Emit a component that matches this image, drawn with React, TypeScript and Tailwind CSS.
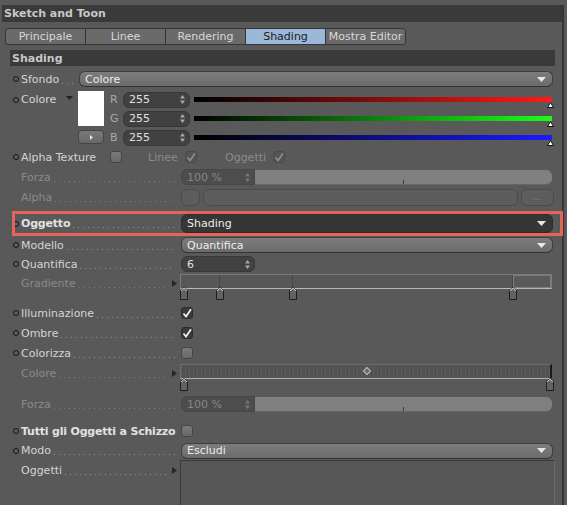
import React from 'react';

const tabs = ['Principale', 'Linee', 'Rendering', 'Shading', 'Mostra Editor'];

function Bullet() {
  return <span className="ml-[2px] w-[6px] h-[6px] rounded-full border border-[#141414] bg-[#5e5e5e]" />;
}

function Tri() {
  return (
    <svg width="5" height="7" viewBox="0 0 5 7" className="shrink-0 mr-[4px]">
      <path d="M0 0L5 3.5L0 7Z" fill="#262626" />
    </svg>
  );
}

function Label({
  text,
  bullet = false,
  dim = false,
  bold = false,
  arrow = false,
  dots = true,
  w = 'w-[170px]',
  h = 'h-full',
}: {
  text: string;
  bullet?: boolean;
  dim?: boolean;
  bold?: boolean;
  arrow?: boolean;
  dots?: boolean;
  w?: string;
  h?: string;
}) {
  const color = dim ? 'text-[#8a8a8a]' : bold ? 'text-[#e2e2e2]' : 'text-[#d4d4d4]';
  return (
    <div className={`flex items-center shrink-0 ${w} ${h}`}>
      <span className="w-[10px] shrink-0 flex items-center">{bullet && <Bullet />}</span>
      <span className={`whitespace-nowrap ${bold ? 'font-bold tracking-[-0.2px]' : ''} ${color}`}>{text}</span>
      {dots && (
        <span className={`flex-1 self-stretch flex items-center ml-[3px] ${arrow ? 'mr-[4px]' : 'mr-[6px]'}`}>
          <span
            className={`w-full h-[1px] mt-[8px] bg-repeat-x bg-[length:5px_1px] ${
              dim
                ? 'bg-[linear-gradient(90deg,#7b7b7b_1px,transparent_1px)]'
                : 'bg-[linear-gradient(90deg,#939393_1px,transparent_1px)]'
            }`}
          />
        </span>
      )}
      {arrow && <Tri />}
    </div>
  );
}

function Row({ h = 'h-[20px]', className = '', children }: { h?: string; className?: string; children: React.ReactNode }) {
  return <div className={`flex items-center pl-[11px] pr-[9px] shrink-0 ${h} ${className}`}>{children}</div>;
}

function DropArrow() {
  return (
    <svg width="9" height="5" viewBox="0 0 9 5">
      <path d="M0 0H9L4.5 5Z" fill="#e8e8e8" />
    </svg>
  );
}

function Spinner({ dim = false }: { dim?: boolean }) {
  return (
    <svg width="5" height="9" viewBox="0 0 5 9">
      <path d="M2.5 0L5 3.5H0Z M0 5.5H5L2.5 9Z" fill={dim ? '#767676' : '#a8a8a8'} />
    </svg>
  );
}

function Dropdown({ value, dark = false, h = 'h-[16px]' }: { value: string; dark?: boolean; h?: string }) {
  return (
    <div
      className={`flex-1 flex items-center justify-between ${h} rounded-[6px] border pl-[5px] pr-[6px] ${
        dark
          ? 'bg-[#363636] border-[#2c2c2c]'
          : 'bg-[linear-gradient(#7d7d7d,#6b6b6b)] border-[#3e3e3e] border-b-[#333]'
      }`}
    >
      <span className="text-[#ededed]">{value}</span>
      <DropArrow />
    </div>
  );
}

function NumField({ value, w, dim = false, joined = false }: { value: string; w: string; dim?: boolean; joined?: boolean }) {
  return (
    <div
      className={`${w} h-[16px] shrink-0 flex items-center justify-between pl-[5px] pr-[4px] border ${
        joined ? 'rounded-l-[6px]' : 'rounded-[6px]'
      } ${dim ? 'bg-[#4d4d4d] border-[#474747] text-[#878787]' : 'bg-[#414141] border-[#383838] text-[#e0e0e0]'}`}
    >
      <span>{value}</span>
      <Spinner dim={dim} />
    </div>
  );
}

function Check({ on = false, dim = false }: { on?: boolean; dim?: boolean }) {
  const cls = dim
    ? 'bg-[#545454] border-[#4a4a4a]'
    : on
    ? 'bg-[#3a3a3a] border-[#2c2c2c]'
    : 'bg-[linear-gradient(#7a7a7a,#686868)] border-[#444]';
  return (
    <span className={`w-[12px] h-[12px] rounded-[3px] border flex items-center justify-center shrink-0 ${cls}`}>
      {on && (
        <svg width="10" height="10" viewBox="0 0 10 10">
          <path d="M1.5 5.5L4 8.5L9 1.2" fill="none" stroke={dim ? '#8d8d8d' : '#f2f2f2'} strokeWidth="1.7" />
        </svg>
      )}
    </span>
  );
}

function Knob() {
  return (
    <svg width="8" height="13" viewBox="0 0 8 13">
      <path d="M0.5 4L4 0.5L7.5 4V12.5H0.5Z" fill="#626262" stroke="#1e1e1e" />
      <path d="M1.2 4L4 1.2L6.8 4" fill="none" stroke="#e2e2e2" />
    </svg>
  );
}

function ForzaRow({ className = '' }: { className?: string }) {
  return (
    <Row className={className}>
      <Label text="Forza" dim />
      <NumField value="100 %" w="w-[74px]" dim joined />
      <div className="flex-1 mr-[1px] h-[15px] rounded-r-[6px] bg-[#808080] border-b border-[#666] flex justify-center items-end">
        <span className="w-[1px] h-[4px] bg-[#3a3a3a]" />
      </div>
    </Row>
  );
}

function ColorChannel({ letter, grad }: { letter: string; grad: string }) {
  return (
    <div className="h-[19px] flex items-center">
      <span className="w-[13px] text-[#a9a9a9]">{letter}</span>
      <NumField value="255" w="w-[67px]" />
      <div className="flex-1 ml-[4px] mr-[1px] relative h-[5px]">
        <div className={`h-full ${grad}`} />
        <svg width="7" height="6" viewBox="0 0 7 6" className="absolute right-[-2px] top-[5px]">
          <path d="M3.5 0.5L6.5 5.5H0.5Z" fill="#fff" stroke="#111" />
        </svg>
      </div>
    </div>
  );
}

export default function App() {
  return (
    <div className="w-[567px] h-[505px] overflow-hidden bg-[#595959] flex text-[11px] leading-none font-['DejaVu_Sans',sans-serif] select-none">
      <div className="w-[562px] shrink-0 flex flex-col">
        <div className="h-[5px] shrink-0" />
        <div className="h-[17px] shrink-0 ml-[2px] bg-[#3a3a3a] flex items-center pl-[2px] font-bold text-[#c8c8c8]">
          Sketch and Toon
        </div>

        {/* tabs */}
        <div className="flex ml-[5px] mt-[6px] h-[17px] shrink-0">
          {tabs.map((t, i) => (
            <div
              key={t}
              className={`w-[81px] flex items-center justify-center border border-[#353535] ${i > 0 ? '-ml-[1px]' : ''} ${
                i === 0 ? 'rounded-l-[3px]' : ''
              } ${i === tabs.length - 1 ? 'rounded-r-[3px]' : ''} ${
                t === 'Shading' ? 'bg-[#9cb8d9] text-[#1a1a1a]' : 'bg-[#6a6a6a] text-[#d8d8d8]'
              }`}
            >
              {t}
            </div>
          ))}
        </div>

        <div className="h-[16px] shrink-0 mt-[5px] ml-[10px] mr-[7px] bg-[#3a3a3a] flex items-center pl-[2px] font-bold text-[#c8c8c8]">
          Shading
        </div>

        <Row h="h-[18px]" className="mt-[4px]">
          <Label text="Sfondo" bullet w="w-[68px]" />
          <Dropdown value="Colore" />
        </Row>

        {/* colore */}
        <div className="flex pl-[11px] pr-[9px] h-[57px] shrink-0 mt-[2px]">
          <div className="w-[67px] h-[19px] flex items-center shrink-0">
            <span className="w-[10px] shrink-0 flex items-center">
              <Bullet />
            </span>
            <span className="text-[#d4d4d4]">Colore</span>
            <svg width="7" height="4" viewBox="0 0 7 4" className="ml-auto mr-[5px] mb-[4px]">
              <path d="M0 0H7L3.5 4Z" fill="#222" />
            </svg>
          </div>
          <div className="w-[26px] flex flex-col shrink-0">
            <div className="h-[35px] mt-[1px] bg-white" />
            <div className="h-[14px] mt-[4px] rounded-[4px] bg-[linear-gradient(#7a7a7a,#676767)] border border-[#444] flex items-center justify-center">
              <svg width="3" height="5" viewBox="0 0 3 5">
                <path d="M0 0L3 2.5L0 5Z" fill="#e6e6e6" />
              </svg>
            </div>
          </div>
          <div className="flex-1 flex flex-col ml-[6px]">
            <ColorChannel letter="R" grad="bg-[linear-gradient(90deg,#000,#ff1a1a)]" />
            <ColorChannel letter="G" grad="bg-[linear-gradient(90deg,#000,#1aff1a)]" />
            <ColorChannel letter="B" grad="bg-[linear-gradient(90deg,#000,#1a1aff)]" />
          </div>
        </div>

        <Row>
          <Label text="Alpha Texture" bullet dots={false} w="w-[99px]" />
          <Check />
          <span className="ml-[26px] w-[37px] text-[#8a8a8a]">Linee</span>
          <Check on dim />
          <span className="ml-[28px] w-[48px] text-[#8a8a8a]">Oggetti</span>
          <Check on dim />
        </Row>

        <ForzaRow />

        <Row>
          <Label text="Alpha" dim />
          <div className="w-[19px] h-[17px] rounded-[6px] bg-[#5d5d5d] border border-[#4b4b4b] shrink-0" />
          <div className="flex-1 h-[17px] ml-[3px] rounded-[6px] bg-[#5d5d5d] border border-[#4b4b4b]" />
          <div className="w-[33px] h-[17px] ml-[3px] -mr-[1px] rounded-[6px] bg-[#5d5d5d] border border-[#4b4b4b] flex items-end justify-center pb-[3px] text-[#858585] text-[9px]">
            ...
          </div>
        </Row>

        {/* oggetto, highlighted */}
        <div className="relative shrink-0 mt-[4px]">
          <Row h="h-[25px]">
            <Label text="Oggetto" bullet bold />
            <Dropdown value="Shading" dark h="h-[19px]" />
          </Row>
          <div className="absolute left-[12px] top-0 w-[551px] h-[25px] border-[3px] border-[#e4645c] pointer-events-none" />
        </div>

        <Row h="h-[18px]">
          <Label text="Modello" bullet />
          <Dropdown value="Quantifica" />
        </Row>

        <Row>
          <Label text="Quantifica" bullet />
          <NumField value="6" w="w-[74px]" />
        </Row>

        {/* gradiente */}
        <div className="flex pl-[11px] pr-[9px] h-[29px] shrink-0">
          <Label text="Gradiente" dim arrow h="h-[18px]" />
          <div className="flex-1 flex flex-col -ml-[1px] mr-[1px]">
            <div className="h-[15px] flex border border-[#7a7a7a] border-b-[#b9b9b9] bg-[#575757]">
              <div className="w-[39px] border-r border-[#474747]" />
              <div className="w-[73px] border-r border-[#474747]" />
              <div className="w-[220px] border-r border-[#474747]" />
              <div className="flex-1 bg-[#5a5a5a] border border-[#7d7d7d]" />
            </div>
            <div className="relative h-[13px] -mt-[2px]">
              {[0, 36, 109, 329].map((x) => (
                <span key={x} className="absolute top-0" style={{ left: x }}>
                  <Knob />
                </span>
              ))}
            </div>
          </div>
        </div>

        <Row>
          <Label text="Illuminazione" bullet />
          <Check on />
        </Row>
        <Row>
          <Label text="Ombre" bullet />
          <Check on />
        </Row>
        <Row>
          <Label text="Colorizza" bullet />
          <Check />
        </Row>

        {/* colore gradient, disabled */}
        <div className="flex pl-[11px] pr-[9px] h-[30px] shrink-0">
          <Label text="Colore" dim arrow h="h-[20px]" />
          <div className="flex-1 flex flex-col -ml-[1px] mr-[1px] mt-[1px]">
            <div className="relative h-[15px] border-t border-[#6c6c6c] border-b border-b-[#b0b0b0] border-l border-l-[#6c6c6c] border-r-2 border-r-[#1a1a1a] bg-[repeating-linear-gradient(90deg,#5d5d5d_0px,#5d5d5d_1px,#525252_1px,#525252_4px)]">
              <span className="absolute left-[183px] top-[3px] w-[6px] h-[6px] rotate-45 border border-[#bdbdbd] bg-[#6a6a6a]" />
            </div>
            <div className="relative h-[13px] -mt-[1px]">
              {[0, 366].map((x) => (
                <span key={x} className="absolute top-0" style={{ left: x }}>
                  <Knob />
                </span>
              ))}
            </div>
          </div>
        </div>

        <ForzaRow className="mt-[1px]" />

        <Row className="mt-[7px]">
          <Label text="Tutti gli Oggetti a Schizzo" bullet bold dots={false} />
          <Check />
        </Row>

        <Row h="h-[19px]">
          <Label text="Modo" bullet />
          <Dropdown value="Escludi" />
        </Row>

        <div className="flex pl-[11px] pr-[9px] flex-1 min-h-0">
          <Label text="Oggetti" arrow h="h-[21px]" />
          <div className="flex-1 -ml-[1px] -mr-[2px] border-t border-l border-[#393939] border-r border-r-[#6a6a6a] bg-[#575757]" />
        </div>
      </div>
      <div className="flex-1 border-l-2 border-[#363636] mt-[5px]" />
    </div>
  );
}
